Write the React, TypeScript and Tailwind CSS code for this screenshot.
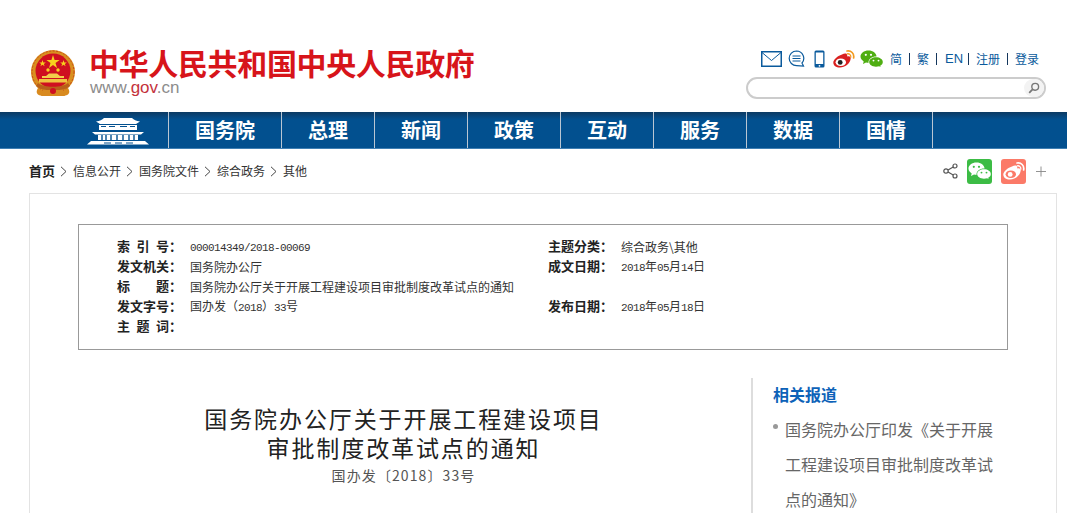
import React from 'react';

const navItems = [
  { name: '国务院', width: 'w-[113px]' },
  { name: '总理', width: 'w-[93px]' },
  { name: '新闻', width: 'w-[93px]' },
  { name: '政策', width: 'w-[93px]' },
  { name: '互动', width: 'w-[93px]' },
  { name: '服务', width: 'w-[93px]' },
  { name: '数据', width: 'w-[93px]' },
  { name: '国情', width: 'w-[93px]' },
];

const crumbs = ['信息公开', '国务院文件', '综合政务', '其他'];

// half-width digits, the reference uses a bitmap font where they are 6px wide
const Num: React.FC<{ children: React.ReactNode }> = ({ children }) => (
  <span className="font-['Liberation_Mono',monospace] text-[11px] tracking-[-0.6px]">{children}</span>
);

const Emblem = () => (
  <svg width="46" height="48" viewBox="0 0 46 48">
    <path d="M8 38 C4 44 10 47 14 45 L32 45 C36 47 42 44 38 38 Z" fill="#d98a1e" />
    <circle cx="23" cy="22" r="22" fill="#d9901f" />
    <circle cx="23" cy="22" r="21" fill="none" stroke="#c9471c" strokeWidth="1" strokeDasharray="2 1.5" />
    <circle cx="23" cy="21" r="17.5" fill="#cf1020" />
    <polygon points="23,5 24.6,10 29.6,10 25.5,13 27,18 23,15 19,18 20.5,13 16.4,10 21.4,10" fill="#f7d11e" />
    <polygon points="12.5,10 13.3,12.4 15.8,12.4 13.8,13.9 14.6,16.3 12.5,14.8 10.4,16.3 11.2,13.9 9.2,12.4 11.7,12.4" fill="#f7d11e" />
    <polygon points="33.5,10 34.3,12.4 36.8,12.4 34.8,13.9 35.6,16.3 33.5,14.8 31.4,16.3 32.2,13.9 30.2,12.4 32.7,12.4" fill="#f7d11e" />
    <circle cx="18" cy="20" r="1.7" fill="#f7d11e" />
    <circle cx="28" cy="20" r="1.7" fill="#f7d11e" />
    <path d="M16 26 L19 23.5 L27 23.5 L30 26 L34 26 L34 28 L12 28 L12 26 Z" fill="#f3cf4a" />
    <rect x="9" y="29" width="28" height="3.5" fill="#f0c542" />
    <path d="M6 36 C12 42 34 42 40 36 L38 33 C32 38 14 38 8 33 Z" fill="#b8601a" />
    <path d="M13 40 L33 40 L35 46 L11 46 Z" fill="#d88a20" />
    <circle cx="23" cy="41" r="3" fill="#cf1020" />
  </svg>
);

const MailIcon = () => (
  <svg width="21" height="16" viewBox="0 0 21 16" fill="none" stroke="#0a5a9c">
    <rect x="0.75" y="0.75" width="19.5" height="14.5" strokeWidth="1.5" />
    <path d="M1 1.5 L10.5 9.5 L20 1.5" strokeWidth="1" />
  </svg>
);

const ChatIcon = () => (
  <svg width="17" height="17" viewBox="0 0 17 17" fill="none" stroke="#0a5a9c">
    <path d="M8.5 1 A7.3 7.3 0 1 0 8.5 15.6 L15.5 16 L14 13 A7.3 7.3 0 0 0 8.5 1 Z" strokeWidth="1.2" />
    <path d="M4.5 6 H12.5 M4.5 8.5 H12.5 M4.5 11 H12.5" strokeWidth="1" />
  </svg>
);

const PhoneIcon = () => (
  <svg width="11" height="18" viewBox="0 0 11 18">
    <rect x="0.5" y="0.5" width="10" height="17" rx="1.5" fill="#0a5a9c" />
    <rect x="1.8" y="2.5" width="7.4" height="11.5" fill="#fff" />
    <circle cx="5.5" cy="15.8" r="0.9" fill="#fff" />
  </svg>
);

const WeiboColor = ({ body = '#d9201f', wave = '#f39a1f', eye = '#222', face = '#fff' }) => (
  <svg width="22" height="18" viewBox="0 0 22 18" fill="none">
    <path d="M9 4.5 C11.5 3 14 3.2 14.2 5 C14.3 6 14 6.4 14.6 6.4 C17 6 18.2 7.4 17.6 9 C17 13.5 12 17.5 7 17.5 C3 17.5 0.3 15.5 0.3 12.5 C0.3 10 4 6 9 4.5 Z" fill={body} />
    <ellipse cx="7.8" cy="12.2" rx="5.2" ry="3.8" fill={face} />
    <circle cx="7.2" cy="12.4" r="2.4" fill={eye} />
    <path d="M14 1 C18 0.2 21.5 3.5 20.6 8" stroke={wave} strokeWidth="1.7" strokeLinecap="round" />
    <path d="M14.2 3.8 C16.4 3.4 18.2 5.2 17.8 7.2" stroke={wave} strokeWidth="1.3" strokeLinecap="round" />
  </svg>
);

const WechatGlyph = ({ back, front, hole }: { back: string; front: string; hole: string }) => (
  <svg width="24" height="18" viewBox="0 0 24 18">
    <path d="M8.5 0.5 C13 0.5 16.5 3.2 16.5 6.6 C16.5 10 13 12.7 8.5 12.7 C7.6 12.7 6.8 12.6 6 12.4 L3 14 L3.7 11.4 C1.8 10.2 0.5 8.5 0.5 6.6 C0.5 3.2 4 0.5 8.5 0.5 Z" fill={back} />
    <circle cx="5.8" cy="4.8" r="1.1" fill={hole} />
    <circle cx="11" cy="4.8" r="1.1" fill={hole} />
    <path d="M16 6.5 C20.2 6.5 23.5 9 23.5 12 C23.5 13.7 22.5 15.1 21 16.1 L21.6 18 L19.3 16.9 C18.3 17.3 17.2 17.5 16 17.5 C11.8 17.5 8.5 15 8.5 12 C8.5 9 11.8 6.5 16 6.5 Z" fill={hole} />
    <path d="M16 7.3 C19.8 7.3 22.8 9.4 22.8 12 C22.8 13.6 21.8 15 20.2 15.8 L20.6 17 L19.2 16.2 C18.2 16.5 17.1 16.7 16 16.7 C12.2 16.7 9.2 14.6 9.2 12 C9.2 9.4 12.2 7.3 16 7.3 Z" fill={front} />
    <circle cx="13.5" cy="10.6" r="0.95" fill={hole} />
    <circle cx="18.5" cy="10.6" r="0.95" fill={hole} />
  </svg>
);

const SearchIcon = () => (
  <svg width="12" height="12" viewBox="0 0 12 12" fill="none" stroke="#777">
    <circle cx="7.2" cy="4.8" r="3.4" strokeWidth="1.4" />
    <path d="M4.8 7.2 L1.2 10.8" strokeWidth="1.8" />
  </svg>
);

const GateIcon = () => (
  <svg width="62" height="27" viewBox="0 0 62 27">
    <path d="M9 3.4 C13 3.4 15 1.8 17 0 L45 0 C47 1.8 49 3.4 53 3.4 L49 6 L13 6 Z" fill="#fff" />
    <rect x="12" y="7" width="38" height="5" fill="#fff" />
    <path d="M14 8.5 H19 M22 8.5 H28 M33 8.5 H40 M43 8.5 H48" stroke="#02508f" strokeWidth="1.2" />
    <path d="M5 14 L57 14 L54 16.5 L8 16.5 Z" fill="#fff" />
    <rect x="11" y="17" width="40" height="5" fill="#fff" />
    <path d="M15 17 V22 M19 17 V22 M24 17 V22 M30 17 V22 M36 17 V22 M42 17 V22 M47 17 V22" stroke="#02508f" strokeWidth="1.4" />
    <path d="M4 23 L58 23 L62 26.5 L0 26.5 Z" fill="#fff" />
    <path d="M17 25 H24 M28 25 H35 M39 25 H46" stroke="#02508f" strokeWidth="1" />
  </svg>
);

const ShareIcon = () => (
  <svg width="15" height="16" viewBox="0 0 15 16" fill="none" stroke="#555" strokeWidth="1.2">
    <circle cx="12" cy="3" r="2" />
    <circle cx="12" cy="13" r="2" />
    <circle cx="3" cy="8" r="2.2" />
    <path d="M5 7 L10.2 4 M5 9 L10.2 12" />
  </svg>
);

const Chevron = () => (
  <svg width="7" height="11" viewBox="0 0 7 11" fill="none" stroke="#444" strokeWidth="1" className="ml-[5px] mr-[6px]">
    <path d="M1 0.8 L6 5.5 L1 10.2" />
  </svg>
);

const Sep = () => <span className="w-px h-[12px] bg-[#14365c]" />;

const Label: React.FC<{ parts: string[] }> = ({ parts }) => (
  <span className="flex justify-between w-[65px] shrink-0 text-[13px] font-bold text-[#222]">
    {parts.map((p) => (
      <span key={p}>{p}</span>
    ))}
  </span>
);

const MetaRow: React.FC<{ parts: string[]; children?: React.ReactNode }> = ({ parts, children }) => (
  <div className="flex items-center h-[20px]">
    <Label parts={parts} />
    <span className="ml-[8px] mt-[1px] text-[12px] text-[#333] whitespace-nowrap">{children}</span>
  </div>
);

export default function App() {
  return (
    <div className="h-[513px] overflow-hidden bg-white font-['Noto_Sans_CJK_SC','Liberation_Sans',sans-serif]">
      {/* Header */}
      <header className="h-[112px] flex justify-between pl-[30px] pr-[21px]">
        <div className="flex pt-[50px]">
          <Emblem />
          <div className="ml-[13px] -mt-[7px]">
            <h1 className="text-[30px] leading-[38px] font-bold tracking-[-0.35px] text-[#d7141a] whitespace-nowrap">
              中华人民共和国中央人民政府
            </h1>
            <p className="-mt-[3px] ml-[1px] text-[17px] leading-[20px] text-[#8c8c8c] font-['Liberation_Sans',sans-serif]">
              www.<span className="text-[#c4323c]">gov</span>.cn
            </p>
          </div>
        </div>
        <div className="w-[300px] pt-[49px]">
          <div className="flex items-center h-[19px] pl-[15px] text-[12px] text-[#0a5a9c]">
            <MailIcon />
            <span className="ml-[6px] flex"><ChatIcon /></span>
            <span className="ml-[9px] flex"><PhoneIcon /></span>
            <span className="ml-[8px] flex"><WeiboColor /></span>
            <span className="ml-[5px] flex"><WechatGlyph back="#4fae12" front="#4fae12" hole="#fff" /></span>
            <span className="ml-[6px]">简</span>
            <span className="ml-[7px] flex"><Sep /></span>
            <span className="ml-[7px]">繁</span>
            <span className="ml-[7px] flex"><Sep /></span>
            <span className="ml-[8px] font-['Liberation_Sans',sans-serif] text-[13px]">EN</span>
            <span className="ml-[5px] flex"><Sep /></span>
            <span className="ml-[7px]">注册</span>
            <span className="ml-[7px] flex"><Sep /></span>
            <span className="ml-[7px]">登录</span>
          </div>
          <div className="mt-[9px] h-[22px] rounded-full border-2 border-[#cccccc] flex justify-end bg-white">
            <span className="w-[20px] h-[18px] rounded-full bg-[#f3f3f3] flex items-center justify-center">
              <SearchIcon />
            </span>
          </div>
        </div>
      </header>

      {/* Main nav */}
      <nav className="h-[37px] flex bg-gradient-to-b from-[#0b3a63] from-0% to-[#02508f] to-20% border-b border-[#3f7fb3]">
        <div className="w-[168px] flex items-center justify-end pr-[19px] pt-[2px]">
          <GateIcon />
        </div>
        {navItems.map((item) => (
          <a
            key={item.name}
            className={`${item.width} border-l border-[#b9c6d3] flex items-center justify-center text-[20px] font-bold text-white`}
          >
            {item.name}
          </a>
        ))}
        <span className="border-l border-[#b9c6d3]" />
      </nav>

      {/* Breadcrumb and share */}
      <div className="h-[44px] flex items-center justify-between pl-[29px] pr-[21px]">
        <div className="flex items-center text-[12px] text-[#333]">
          <span className="text-[13px] font-bold text-[#222]">首页</span>
          {crumbs.map((c) => (
            <React.Fragment key={c}>
              <Chevron />
              <span>{c}</span>
            </React.Fragment>
          ))}
        </div>
        <div className="flex items-center">
          <ShareIcon />
          <span className="ml-[9px] w-[25px] h-[25px] rounded-[3px] bg-[#3cbc45] flex items-center justify-center">
            <WechatGlyph back="#fff" front="#fff" hole="#3cbc45" />
          </span>
          <span className="ml-[9px] w-[25px] h-[25px] rounded-[3px] bg-[#fb7a68] flex items-center justify-center">
            <WeiboColor body="#fff" wave="#fff" eye="#fff" face="#fb7a68" />
          </span>
          <span className="ml-[10px] w-[10px] h-[25px] flex items-center justify-center text-[#888]">
            <svg width="11" height="11" viewBox="0 0 11 11" stroke="#888" strokeWidth="1"><path d="M5.5 0 V11 M0 5.5 H11" /></svg>
          </span>
        </div>
      </div>

      {/* Article card */}
      <div className="ml-[29px] w-[1028px] h-[400px] border border-[#e3e3e3] pt-[30px]">
        <div className="ml-[48px] w-[930px] h-[126px] border border-[#999] pl-[38px] pt-[11px] grid grid-cols-[431px_1fr] auto-rows-[20px] content-start">
          <MetaRow parts={['索', '引', '号：']}><Num>000014349/2018-00069</Num></MetaRow>
          <MetaRow parts={['主题分类：']}>综合政务\其他</MetaRow>
          <MetaRow parts={['发文机关：']}>国务院办公厅</MetaRow>
          <MetaRow parts={['成文日期：']}><Num>2018</Num>年<Num>05</Num>月<Num>14</Num>日</MetaRow>
          <div className="col-span-2">
            <MetaRow parts={['标', '题：']}>国务院办公厅关于开展工程建设项目审批制度改革试点的通知</MetaRow>
          </div>
          <MetaRow parts={['发文字号：']}>国办发（<Num>2018</Num>）<Num>33</Num>号</MetaRow>
          <MetaRow parts={['发布日期：']}><Num>2018</Num>年<Num>05</Num>月<Num>18</Num>日</MetaRow>
          <MetaRow parts={['主', '题', '词：']} />
        </div>

        <div className="mt-[28px] flex">
          <div className="w-[721px] pl-[26px] pt-[26px] text-center">
            <h2 className="text-[23px] leading-[29px] tracking-[1.9px] text-[#222] font-normal">
              国务院办公厅关于开展工程建设项目
              <br />
              审批制度改革试点的通知
            </h2>
            <p className="mt-[3px] text-[14px] leading-[20px] tracking-[1.1px] text-[#555]">国办发〔2018〕33号</p>
          </div>
          <aside className="border-l-2 border-[#dddddd] pl-[20px] w-[270px]">
            <h3 className="text-[16px] leading-[32px] font-bold text-[#0d62b8]">相关报道</h3>
            <div className="flex mt-[2px]">
              <span className="mt-[12px] w-[5px] h-[5px] rounded-full bg-[#999] shrink-0" />
              <p className="ml-[7px] w-[208px] text-[16px] leading-[35px] text-[#666]">
                国务院办公厅印发《关于开展工程建设项目审批制度改革试点的通知》
              </p>
            </div>
          </aside>
        </div>
      </div>
    </div>
  );
}
